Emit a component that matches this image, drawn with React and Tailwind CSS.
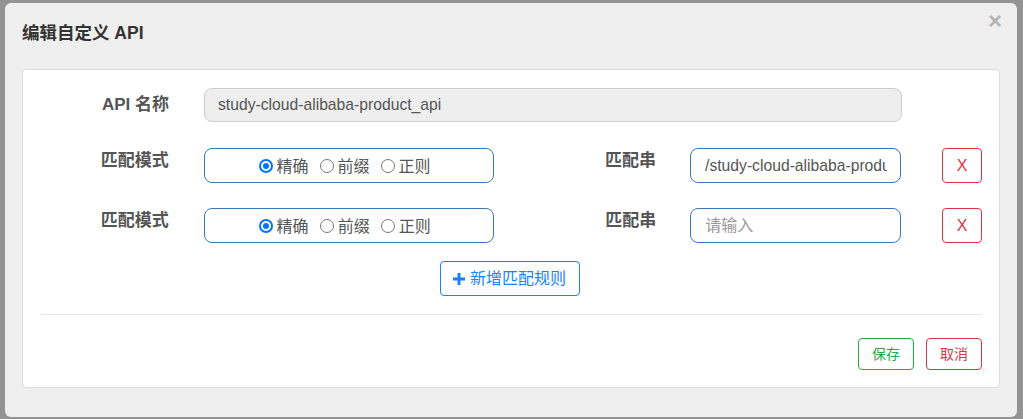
import React from "react";

const font = { fontFamily: '"Liberation Sans", "Noto Sans CJK SC", sans-serif' };

const Radio = ({ checked, label }) => (
    <span className="flex items-center">
        {checked ? (
            <span className="w-[14px] h-[14px] rounded-full bg-[#0075ff] flex items-center justify-center">
                <span className="w-[10px] h-[10px] rounded-full border-2 border-white bg-[#0075ff]"></span>
            </span>
        ) : (
            <span className="w-[14px] h-[14px] rounded-full border border-[#767676] bg-white"></span>
        )}
        <span className="ml-[4px] text-[16px] text-[#555] leading-none pt-[3px]">{label}</span>
    </span>
);

const MatchRow = ({ value }) => (
    <div className="flex items-start">
        <div className="w-[146px] text-right text-[17px] font-bold text-[#555]">匹配模式</div>
        <div className="ml-[35px] w-[291px] h-[35px] border border-[#3a78b5] rounded-lg flex items-center justify-center gap-[11px] pr-[9px]">
            <Radio checked label="精确" />
            <Radio label="前缀" />
            <Radio label="正则" />
        </div>
        <div className="w-[162px] text-right text-[17px] font-bold text-[#555]">匹配串</div>
        <div className="ml-[34px] w-[211px] h-[35px] border border-[#3a78b5] rounded-lg flex items-center pl-[14px] pr-[13px] text-[15.7px]">
            <div className="overflow-hidden whitespace-nowrap">
                {value ? (
                    <span className="text-[#555]">{value}</span>
                ) : (
                    <span className="text-[#999] text-[16px]">请输入</span>
                )}
            </div>
        </div>
        <button className="ml-[41px] w-[40px] h-[35px] border border-[#dc3545] rounded text-[#dc3545] text-[16px] bg-white">
            X
        </button>
    </div>
);

const App = () => {
    return (
        <div className="w-[1023px] h-[419px] bg-[#939393] pt-[3px] pl-[5px] overflow-hidden" style={font}>
            {/* Modal */}
            <div className="w-[1012px] h-[414px] bg-[#efefef] rounded-md relative">
                <span className="absolute right-[15px] top-[6px] text-[24px] font-bold text-[#b5b5b5] leading-none">×</span>

                {/* Header */}
                <div className="h-[66px] pl-[17px] pt-[17px]">
                    <h1 className="text-[17.5px] font-bold text-[#333]">编辑自定义 API</h1>
                </div>

                {/* Body card */}
                <div className="ml-[17px] w-[978px] h-[319px] bg-white border border-[#dcdcdc] rounded pt-[18px] px-[17px]">
                    <div className="flex items-center">
                        <div className="w-[129px] text-right text-[17px] font-bold text-[#555]">API 名称</div>
                        <div className="ml-[35px] w-[698px] h-[34px] bg-[#eeeeee] border border-[#cccccc] rounded-lg flex items-center pl-[13px] text-[15.7px] text-[#555]">
                            study-cloud-alibaba-product_api
                        </div>
                    </div>

                    <div className="mt-[26px] -ml-[17px]">
                        <MatchRow value="/study-cloud-alibaba-product_api" />
                    </div>
                    <div className="mt-[25px] -ml-[17px]">
                        <MatchRow />
                    </div>

                    <div className="mt-[18px] flex justify-center pr-[3px]">
                        <button className="h-[35px] w-[140px] border border-[#1a82f7] rounded text-[#1a82f7] text-[16px] flex items-center justify-center bg-white">
                            <svg width="12" height="12" viewBox="0 0 12 12" className="mr-[5px]">
                                <path d="M4.5 0h3v4.5H12v3H7.5V12h-3V7.5H0v-3h4.5z" fill="#1a82f7" />
                            </svg>
                            新增匹配规则
                        </button>
                    </div>

                    <div className="mt-[18px] h-px bg-[#e5e5e5] ml-px"></div>

                    <div className="mt-[23px] flex justify-end gap-[12px]">
                        <button className="w-[56px] h-[32px] border border-[#28a745] rounded text-[#28a745] text-[14px] bg-white">保存</button>
                        <button className="w-[56px] h-[32px] border border-[#dc3545] rounded text-[#dc3545] text-[14px] bg-white">取消</button>
                    </div>
                </div>
            </div>
        </div>
    );
};

export default App;
